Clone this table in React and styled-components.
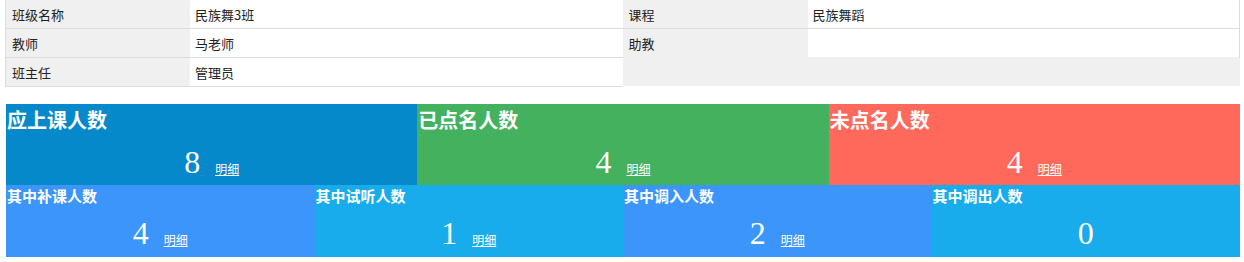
import React from 'react';
import styled, { createGlobalStyle } from 'styled-components';

const GlobalStyle = createGlobalStyle`
    html, body {
        margin : 0;
        padding : 0;
        background : #fff;
    }
    body {
        font-family : "Noto Sans CJK SC", "Liberation Sans", sans-serif;
    }
`;

const Page = styled.div`
    width : 1234px;
    padding : 0 4px 0 6px;
`;

const InfoPanel = styled.div`
    display : flex;
    height : 86px;
    margin-bottom : 18px;
    background : #f0f0f0;
`;

const InfoTable = styled.div`
    flex : 1;
    display : flex;
    flex-direction : column;
    align-self : flex-start;
    ${props => props.$left && 'margin-left : -1px; border-left : 1px solid #dcdcdc;'}
    ${props => props.$right && 'border-right : 1px solid #dcdcdc;'}
`;

const InfoRow = styled.div`
    display : grid;
    grid-template-columns : ${props => props.$labelWidth}px 1fr;
    height : 28px;
    border-bottom : 1px solid ${props => props.$last ? 'transparent' : '#dcdcdc'};
    font-size : 13px;
    color : #222;
`;

const InfoLabel = styled.div`
    display : flex;
    align-items : center;
    padding-left : 6px;
    background : #f0f0f0;
`;

const InfoValue = styled.div`
    display : flex;
    align-items : center;
    padding-left : 5px;
    background : #fff;
`;

const StatGrid = styled.div`
    display : grid;
    grid-template-columns : repeat(${props => props.$cols}, 1fr);
`;

const StatBox = styled.div`
    display : flex;
    flex-direction : column;
    height : ${props => props.$small ? 72 : 81}px;
    background : ${props => props.$color};
    color : #fff;
`;

const StatTitle = styled.div`
    font-family : "Liberation Serif", "Noto Sans CJK SC", serif;
    font-weight : bold;
    font-size : ${props => props.$small ? 15 : 20}px;
    line-height : ${props => props.$small ? 24 : 35}px;
    padding-left : 1px;
    white-space : nowrap;
`;

const StatValue = styled.div`
    flex : 1;
    display : flex;
    justify-content : center;
    align-items : center;
`;

const Count = styled.span`
    font-family : "Liberation Serif", serif;
    font-size : 32px;
    line-height : 1;
`;

const DetailLink = styled.a`
    margin-left : 15px;
    margin-top : 12px;
    font-size : 12px;
    color : #fff;
    text-decoration : underline;
    cursor : pointer;
`;

const leftInfo = [
    ['班级名称', '民族舞3班'],
    ['教师', '马老师'],
    ['班主任', '管理员'],
];

const rightInfo = [
    ['课程', '民族舞蹈'],
    ['助教', ''],
];

const mainStats = [
    { title: '应上课人数', count: 8, color: '#0589cb', link: true },
    { title: '已点名人数', count: 4, color: '#43b15d', link: true },
    { title: '未点名人数', count: 4, color: '#ff695c', link: true },
];

const subStats = [
    { title: '其中补课人数', count: 4, color: '#3c95fb', link: true },
    { title: '其中试听人数', count: 1, color: '#19aced', link: true },
    { title: '其中调入人数', count: 2, color: '#3c95fb', link: true },
    { title: '其中调出人数', count: 0, color: '#19aced', link: false },
];

function Stat({ stat, small }) {
    return (
        <StatBox $color={stat.color} $small={small}>
            <StatTitle $small={small}>{stat.title}</StatTitle>
            <StatValue>
                <Count>{stat.count}</Count>
                {stat.link ? <DetailLink>明细</DetailLink> : null}
            </StatValue>
        </StatBox>
    );
}

export default function App() {
    return (
        <Page>
            <GlobalStyle />
            <InfoPanel>
                <InfoTable $left>
                    {leftInfo.map(([label, value]) => (
                        <InfoRow key={label} $labelWidth={184}>
                            <InfoLabel>{label}</InfoLabel>
                            <InfoValue>{value}</InfoValue>
                        </InfoRow>
                    ))}
                </InfoTable>
                <InfoTable $right>
                    {rightInfo.map(([label, value], i) => (
                        <InfoRow key={label} $labelWidth={185} $last={i === rightInfo.length - 1}>
                            <InfoLabel>{label}</InfoLabel>
                            <InfoValue>{value}</InfoValue>
                        </InfoRow>
                    ))}
                </InfoTable>
            </InfoPanel>
            <StatGrid $cols={3}>
                {mainStats.map(s => <Stat key={s.title} stat={s} />)}
            </StatGrid>
            <StatGrid $cols={4}>
                {subStats.map(s => <Stat key={s.title} stat={s} small />)}
            </StatGrid>
        </Page>
    );
}
